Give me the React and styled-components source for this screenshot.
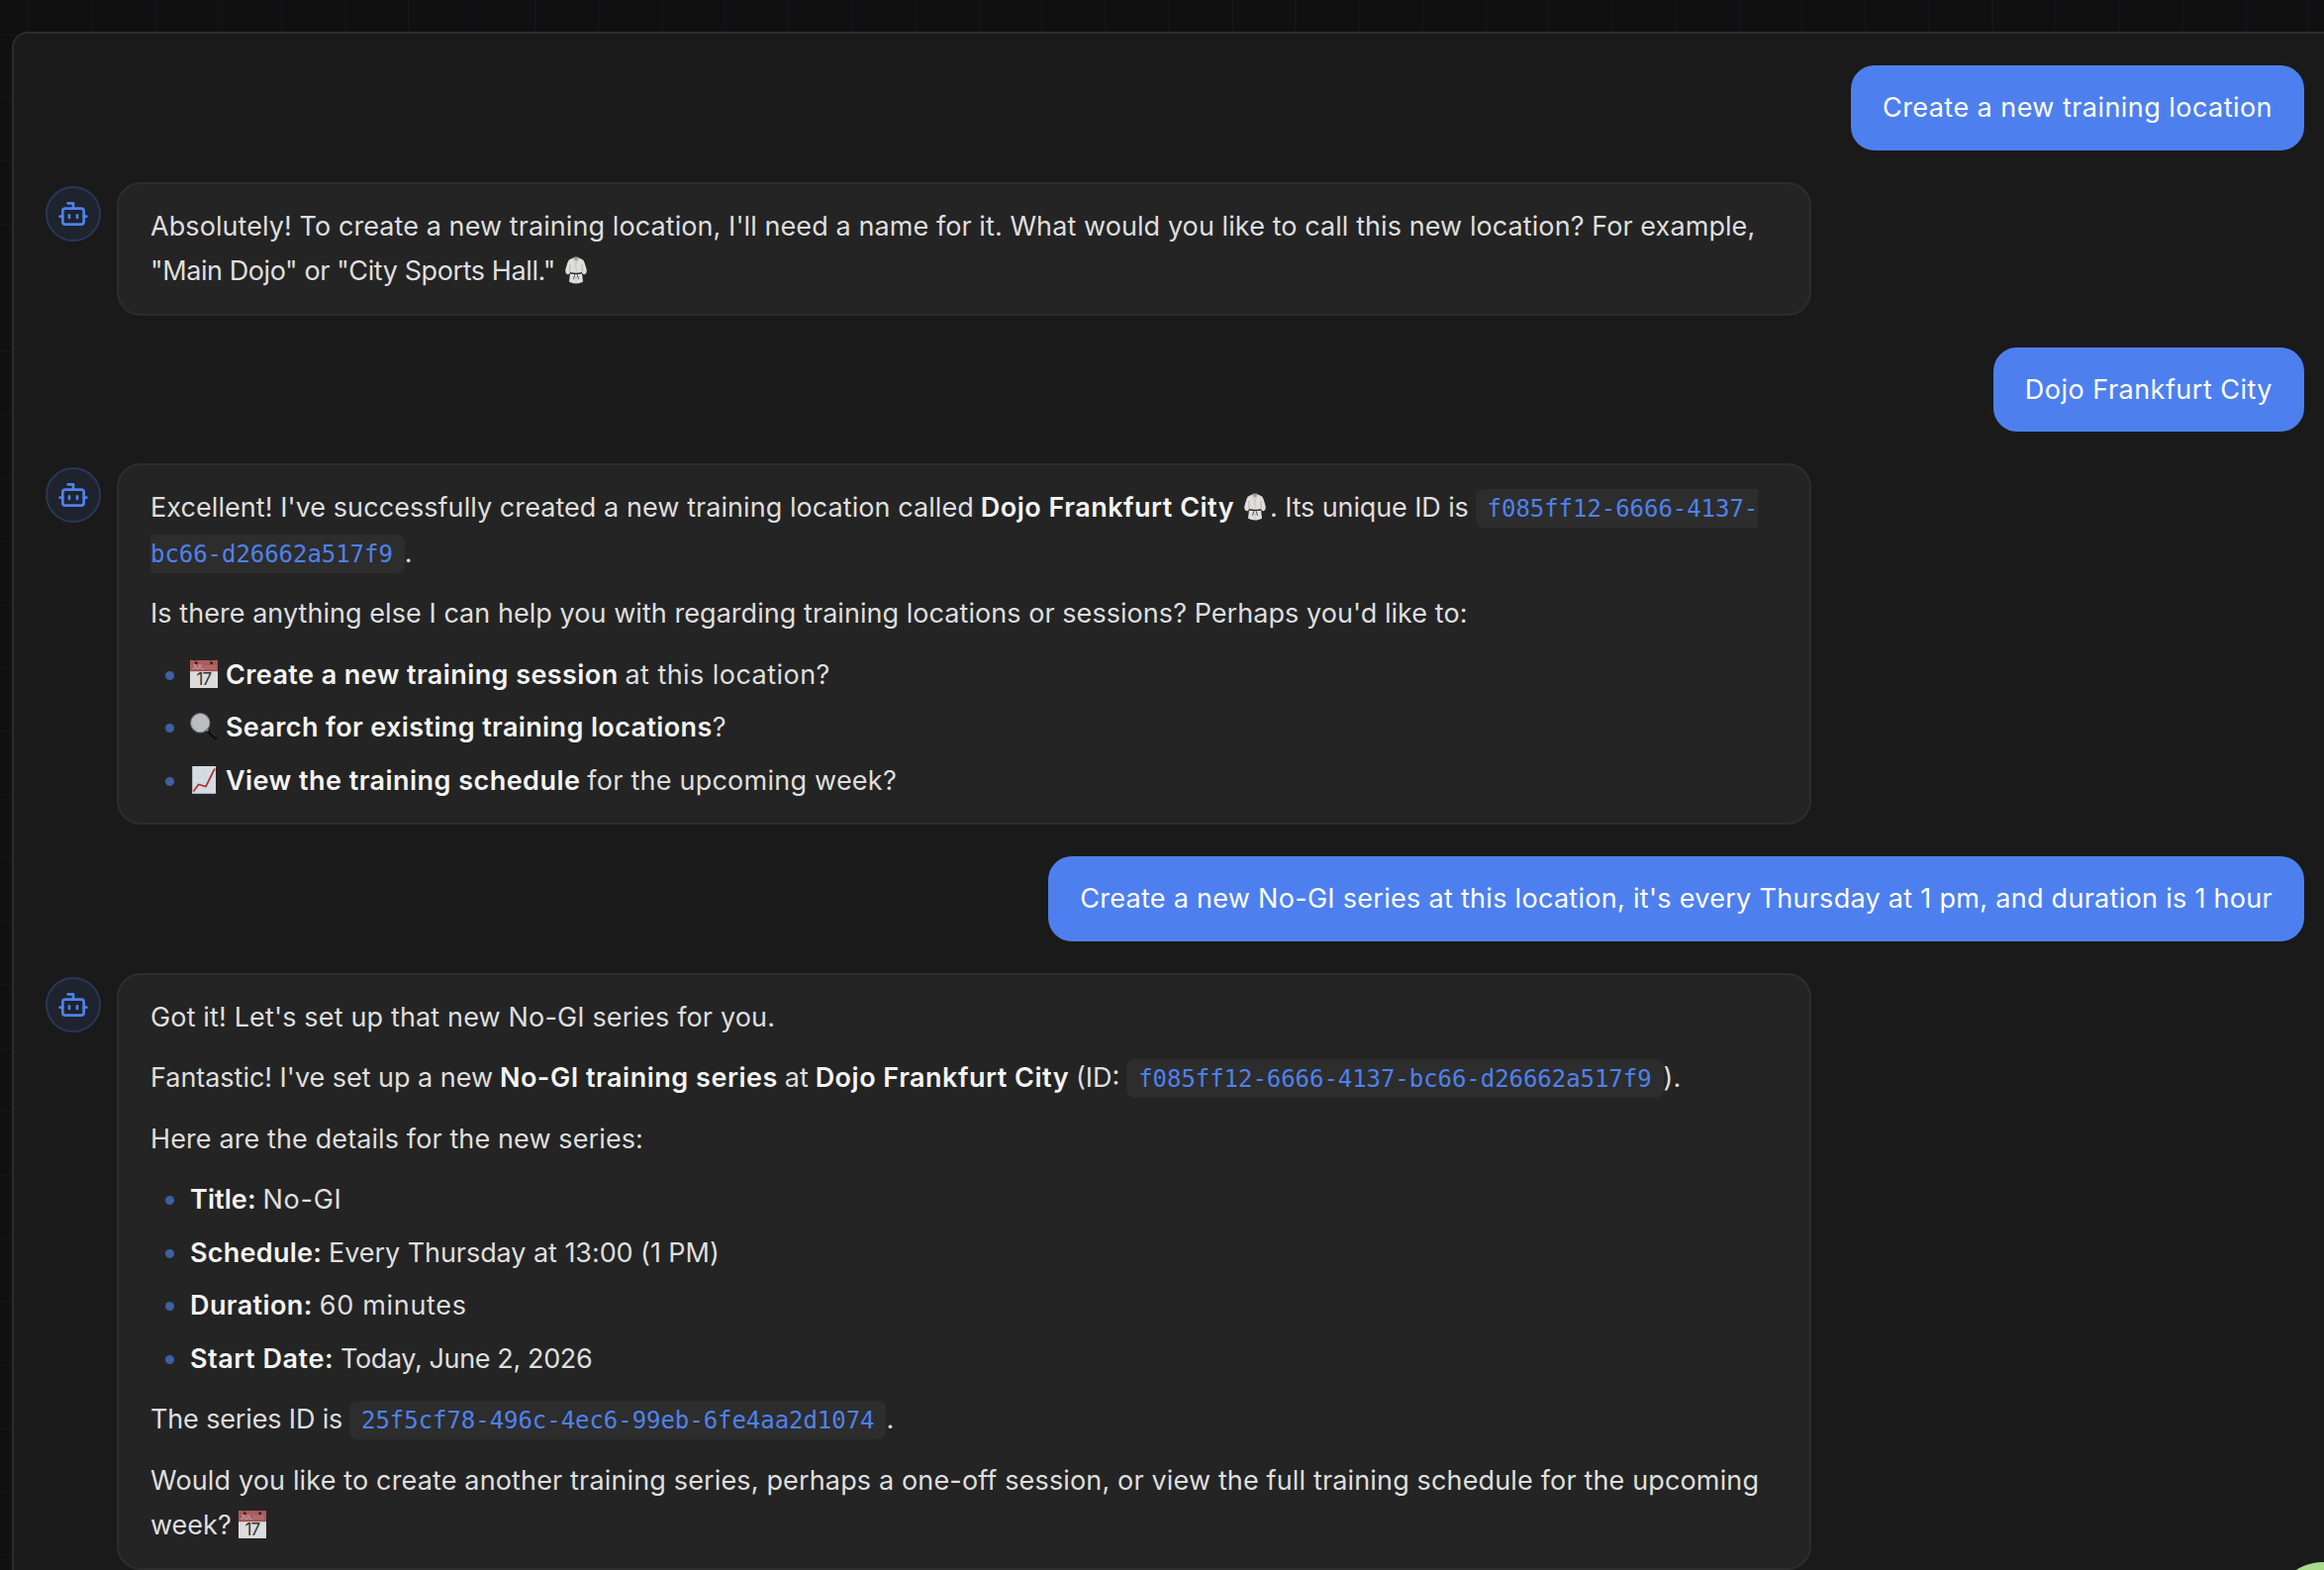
import styled, {createGlobalStyle} from "styled-components";
import {Bot} from "lucide-react";

const GlobalStyle = createGlobalStyle`
    * {
        box-sizing: border-box;
    }
    body {
        margin: 0;
        background: #101010;
        overflow: hidden;
    }
`;

const Page = styled.div`
    width: 100vw;
    height: 100vh;
    padding: 32px 0 0 12px;
    overflow: hidden;
    background-color: #101010;
    background-image:
        linear-gradient(to right, #13131a 2px, transparent 2px),
        linear-gradient(to bottom, #13131a 2px, transparent 2px);
    background-size: 64px 64px;
    background-position: 28px 34px;
    font-family: Inter, "Liberation Sans", sans-serif;
    font-size: 27px;
    line-height: 45.5px;
`;

const Panel = styled.main`
    height: 100%;
    padding: 32px 20px 0 32px;
    display: flex;
    flex-direction: column;
    gap: 32px;
    overflow: hidden;
    background: #1a1a1a;
    border: 2px solid #2d2d2d;
    border-width: 2px 0 0 2px;
    border-top-left-radius: 16px;
`;

const BotRow = styled.div`
    display: flex;
    align-items: flex-start;
    flex-shrink: 0;
    gap: 16px;
`;

const Avatar = styled.div`
    width: 56px;
    height: 56px;
    margin-top: 4px;
    flex-shrink: 0;
    display: flex;
    align-items: center;
    justify-content: center;
    color: #4f82ee;
    background: #1f232d;
    border: 2px solid #293759;
    border-radius: 50%;
`;

const BotBubble = styled.div`
    width: 1712px;
    padding: 20px 32px;
    display: flex;
    flex-direction: column;
    gap: 16px;
    color: #dfdfdf;
    background: #242424;
    border: 2px solid #2d2d2d;
    border-radius: 24px;
    white-space: nowrap;
    word-spacing: -0.7px;
`;

const UserBubble = styled.div`
    align-self: flex-end;
    flex-shrink: 0;
    padding: 20px 32px;
    color: #fff;
    background: #4d80ee;
    border-radius: 24px;
    white-space: nowrap;
    letter-spacing: ${p => p.$track}px;
`;

const P = styled.p`
    margin: 0;
`;

const T = styled.span`
    letter-spacing: ${p => p.$track}px;
    word-spacing: normal;
`;

const B = styled.strong`
    font-weight: 600;
    color: #f4f4f4;
    letter-spacing: ${p => p.$track}px;
    word-spacing: normal;
`;

const Code = styled.code`
    padding: 6px 12px 5px;
    font-family: "DejaVu Sans Mono", "Liberation Mono", monospace;
    font-size: 24px;
    line-height: 1;
    letter-spacing: -0.05px;
    color: #4f82ee;
    background: #2d2d2d;
    border-radius: 8px;
`;

const List = styled.ul`
    margin: 0;
    padding: 0 0 0 15px;
    display: flex;
    flex-direction: column;
    gap: 8px;
    list-style: none;
`;

const Item = styled.li`
    display: flex;
    gap: 16px;

    &::before {
        content: "";
        width: 9px;
        height: 9px;
        margin-top: 19px;
        border-radius: 50%;
        background: #3f5fa3;
    }
`;

const Emoji = styled.svg`
    width: 28px;
    height: 28px;
    margin-right: 1px;
    vertical-align: -4px;
`;

const HelpBubble = styled.div`
    position: fixed;
    left: 2297px;
    top: 1578px;
    width: 100px;
    height: 100px;
    border-radius: 50%;
    background: radial-gradient(circle at 55% 45%, #b4e070 0%, #a5dc94 75%, #9dd3ae 100%);
`;

function BotMessage({children}) {
    return (
        <BotRow>
            <Avatar>
                <Bot size={32} strokeWidth={2} />
            </Avatar>
            <BotBubble>{children}</BotBubble>
        </BotRow>
    );
}

function GiIcon() {
    return (
        <Emoji viewBox="0 0 28 28">
            <path d="M11 1.5 H17 L21 3.5 Q22.6 5 24.8 14 L24.4 17 L22 18.6 L20 16.5 L21 25.8 Q14 29 7 25.8 L8 16.5 L6 18.6 L3.6 17 L3.2 14 Q5.4 5 7 3.5 Z" fill="#e0dedb" />
            <path d="M7.9 8 V16 M20.1 8 V16" stroke="#aaa7a4" strokeWidth="0.8" />
            <path d="M11.8 0.6 H16.2 L15.6 3.6 L14 5 L12.4 3.6 Z" fill="#a09c98" />
            <path d="M11.5 2 L13.6 8.5 L14.5 15 M16.5 2 L12.6 12" fill="none" stroke="#bfbbb8" strokeWidth="0.7" />
            <path d="M8 16 Q14 17.4 20 16 V17.4 Q14 18.8 8 17.4 Z" fill="#2a2725" />
            <path d="M13 18 L11.4 23 M15 18 L16.6 23" stroke="#4a4643" strokeWidth="0.9" />
            <path d="M14 20 V27" stroke="#b3afac" strokeWidth="0.6" />
        </Emoji>
    );
}

function CalendarIcon() {
    return (
        <Emoji viewBox="0 0 28 28">
            <rect width="28" height="28" fill="#dcdcdc" />
            <rect width="28" height="11" fill="#a95d5d" />
            <rect y="10.4" width="28" height="0.8" fill="#904b4b" />
            <path d="M14 7 H26" stroke="#b16868" strokeWidth="4" />
            <text x="2" y="9.3" fontSize="6.5" fontWeight="700" fill="#cf9d9d" fontFamily="Liberation Sans, sans-serif">JUL</text>
            <path d="M4.6 0 L6.3 3 M19.6 0 L21.5 3" stroke="#6d4040" strokeWidth="0.8" />
            <circle cx="6.3" cy="2.7" r="1.5" fill="#322828" />
            <circle cx="21.7" cy="2.7" r="1.5" fill="#322828" />
            <text x="13.8" y="25.2" fontSize="17" textAnchor="middle" letterSpacing="-1" fill="#333" fontFamily="Inter, sans-serif">17</text>
        </Emoji>
    );
}

function SearchIcon() {
    return (
        <Emoji viewBox="0 0 28 28">
            <path d="M17 17 L21 20.5" stroke="#8b9298" strokeWidth="2" />
            <path d="M20 19.5 L25.6 25.2" stroke="#0d0f12" strokeWidth="4.4" strokeLinecap="round" />
            <path d="M21 18.8 L26.3 24" stroke="#5a626a" strokeWidth="0.9" strokeLinecap="round" />
            <circle cx="10.3" cy="10.3" r="9.2" fill="#bdbdbd" stroke="#6e7983" strokeWidth="2" />
            <circle cx="10.3" cy="10.3" r="8.6" fill="none" stroke="#ccd2d7" strokeWidth="1" />
        </Emoji>
    );
}

function ChartIcon() {
    return (
        <Emoji viewBox="0 0 28 28">
            <rect x="2" width="24" height="28" fill="#d5dde5" />
            <path d="M2 5.6 H26 M2 11.2 H26 M2 16.8 H26 M2 22.4 H26 M8 0 V28 M14 0 V28 M20 0 V28" stroke="#ccd5dd" strokeWidth="0.7" />
            <path d="M2.5 0 V27.5 H26" fill="none" stroke="#a9b3bc" strokeWidth="1" />
            <path d="M3.5 25.5 L8.5 18.5 L16 20.5 L25 2.5" fill="none" stroke="#b5302e" strokeWidth="1.7" />
        </Emoji>
    );
}

export default function App() {
    return (
        <Page>
            <GlobalStyle />
            <Panel>
                <UserBubble $track={0.45}>Create a new training location</UserBubble>

                <BotMessage>
                    <P>
                        <T $track={0.08}>Absolutely! To create a new training location, I'll need a name for it. What would you like to call this new location? For example,</T>
                        <br />
                        <T $track={-0.41}>"Main Dojo" or "City Sports Hall."</T> <GiIcon />
                    </P>
                </BotMessage>

                <UserBubble $track={0.48}>Dojo Frankfurt City</UserBubble>

                <BotMessage>
                    <P>
                        <T $track={0.062}>Excellent! I've successfully created a new training location called</T>{" "}
                        <B $track={0.5}>Dojo Frankfurt City</B> <GiIcon />
                        <T $track={-0.12}>. Its unique ID is</T>{" "}
                        <Code>f085ff12-6666-4137-<br />bc66-d26662a517f9</Code>.
                    </P>
                    <P>
                        <T $track={0.05}>Is there anything else I can help you with regarding training locations or sessions? Perhaps you'd like to:</T>
                    </P>
                    <List>
                        <Item>
                            <div>
                                <CalendarIcon /> <B $track={0.42}>Create a new training session</B>{" "}
                                <T $track={0.45}>at this location?</T>
                            </div>
                        </Item>
                        <Item>
                            <div>
                                <SearchIcon /> <B $track={0.375}>Search for existing training locations</B>?
                            </div>
                        </Item>
                        <Item>
                            <div>
                                <ChartIcon /> <B $track={0.461}>View the training schedule</B>{" "}
                                <T $track={0.24}>for the upcoming week?</T>
                            </div>
                        </Item>
                    </List>
                </BotMessage>

                <UserBubble $track={0.29}>
                    Create a new No-GI series at this location, it's every Thursday at 1 pm, and duration is 1 hour
                </UserBubble>

                <BotMessage>
                    <P><T $track={0.15}>Got it! Let's set up that new No-GI series for you.</T></P>
                    <P>
                        <T $track={-0.03}>Fantastic! I've set up a new</T>{" "}
                        <B $track={0.52}>No-GI training series</B> at{" "}
                        <B $track={0.5}>Dojo Frankfurt City</B> (ID:{" "}
                        <Code>f085ff12-6666-4137-bc66-d26662a517f9</Code>).
                    </P>
                    <P><T $track={0.11}>Here are the details for the new series:</T></P>
                    <List>
                        <Item>
                            <div><B $track={0.08}>Title:</B> <T $track={0.75}>No-GI</T></div>
                        </Item>
                        <Item>
                            <div><B $track={0.26}>Schedule:</B> <T $track={-0.06}>Every Thursday at 13:00 (1 PM)</T></div>
                        </Item>
                        <Item>
                            <div><B $track={0.4}>Duration:</B> <T $track={0.7}>60 minutes</T></div>
                        </Item>
                        <Item>
                            <div><B $track={0.54}>Start Date:</B> <T $track={-0.37}>Today, June 2, 2026</T></div>
                        </Item>
                    </List>
                    <P>
                        <T $track={-0.15}>The series ID is</T>{" "}
                        <Code>25f5cf78-496c-4ec6-99eb-6fe4aa2d1074</Code>.
                    </P>
                    <P>
                        <T $track={0.148}>Would you like to create another training series, perhaps a one-off session, or view the full training schedule for the upcoming</T>
                        <br />
                        <T $track={0}>week?</T> <CalendarIcon />
                    </P>
                </BotMessage>
            </Panel>
            <HelpBubble />
        </Page>
    );
}
